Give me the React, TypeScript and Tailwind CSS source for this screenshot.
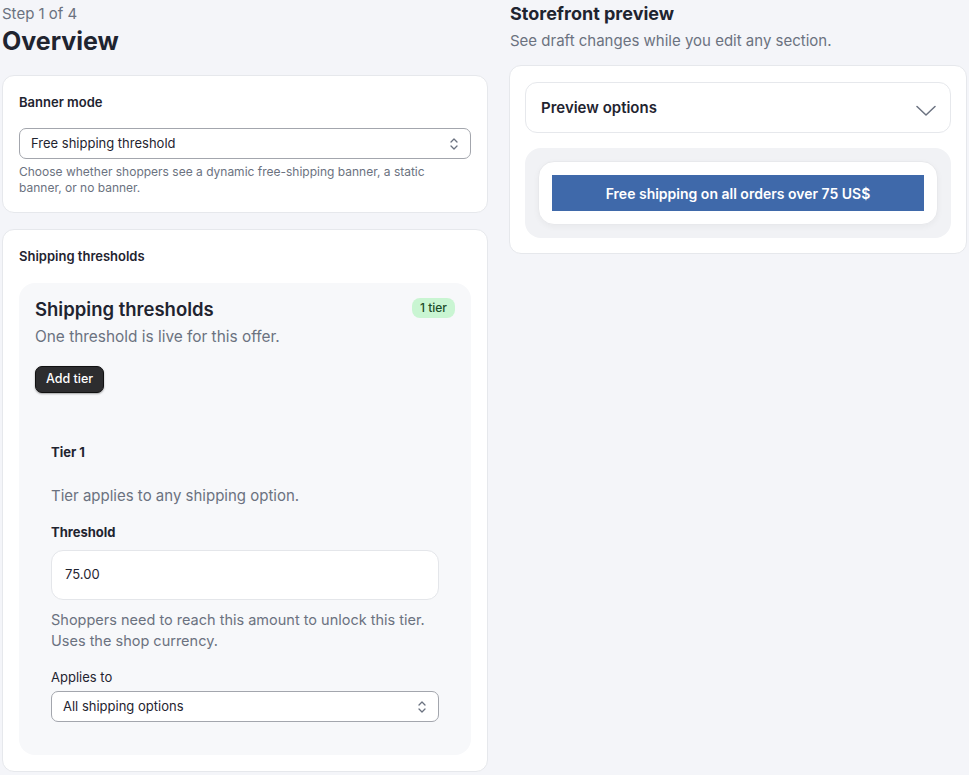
const font = { fontFamily: "Inter, 'Noto Sans', sans-serif" };

function UpDown() {
  return (
    <svg width="10" height="14" viewBox="0 0 10 14" fill="none" stroke="#6b7280" strokeWidth="1.3" strokeLinecap="round" strokeLinejoin="round">
      <path d="M2 5 5 2l3 3" />
      <path d="M2 9l3 3 3-3" />
    </svg>
  );
}

function Chevron() {
  return (
    <svg width="20" height="11" viewBox="0 0 20 11" fill="none" stroke="#6b7280" strokeWidth="1.5" strokeLinecap="round" strokeLinejoin="round">
      <path d="M1 1.5l9 8.5 9-8.5" />
    </svg>
  );
}

function SelectBox({ value }: { value: string }) {
  return (
    <div className="flex h-[31px] items-center justify-between rounded-[7px] border border-[#a3a6ad] bg-white pl-[11px] pr-[11px] text-[13px] text-[#1f2430]">
      <span>{value}</span>
      <UpDown />
    </div>
  );
}

function BannerModeCard() {
  return (
    <section className="rounded-xl border border-[#e6e8ec] bg-white px-4 pt-4 pb-4">
      <h3 className="text-[13px] leading-5 font-semibold text-[#1f2430]">Banner mode</h3>
      <div className="mt-4">
        <SelectBox value="Free shipping threshold" />
      </div>
      <p className="mt-[5px] max-w-[430px] text-[12px] leading-4 text-[#6b7280]">
        Choose whether shoppers see a dynamic free-shipping banner, a static
        banner, or no banner.
      </p>
    </section>
  );
}

function TierEditor() {
  return (
    <div className="mt-[49px] px-4 pb-[17px]">
      <h4 className="text-[13px] leading-5 font-bold text-[#1f2430]">Tier 1</h4>
      <p className="mt-[23px] text-[15px] leading-[22px] text-[#6b7280]">
        Tier applies to any shipping option.
      </p>
      <label className="mt-[15px] block text-[13px] leading-5 font-bold text-[#1f2430]">Threshold</label>
      <div className="mt-2 flex h-[50px] items-center rounded-xl border border-[#e4e6ea] bg-white px-[13px] text-[13px] text-[#1f2430]">
        75.00
      </div>
      <p className="mt-[9px] text-[14.5px] leading-[21px] text-[#6b7280]">
        Shoppers need to reach this amount to unlock this tier.
        <br />
        Uses the shop currency.
      </p>
      <label className="mt-[16px] block text-[13px] leading-5 text-[#1f2430]">Applies to</label>
      <div className="mt-1">
        <SelectBox value="All shipping options" />
      </div>
    </div>
  );
}

function ThresholdsCard() {
  return (
    <section className="mt-4 rounded-xl border border-[#e6e8ec] bg-white px-4 pt-4 pb-4">
      <h3 className="text-[13px] leading-5 font-semibold text-[#1f2430]">Shipping thresholds</h3>
      <div className="mt-[17px] rounded-2xl bg-[#f7f8fa] px-4 pt-[14px] pb-4">
        <div className="flex items-start justify-between">
          <h2 className="text-[18.5px] leading-6 font-semibold text-[#1f2430]">Shipping thresholds</h2>
          <span className="mt-[1px] rounded-lg bg-[#c9f5d2] px-2 py-[2px] text-[12px] leading-4 font-medium text-[#1d4d2a]">
            1 tier
          </span>
        </div>
        <p className="mt-[5px] text-[15.4px] leading-[22px] text-[#6b7280]">
          One threshold is live for this offer.
        </p>
        <button className="mt-[18px] h-[27px] rounded-[7px] border border-[#111] bg-[#2d2d2f] px-[10px] text-[12.5px] font-medium text-white shadow-[0_1px_2px_rgba(0,0,0,0.35)]">
          Add tier
        </button>
        <TierEditor />
      </div>
    </section>
  );
}

function PreviewPanel() {
  return (
    <section className="mt-[13px] rounded-xl border border-[#e6e8ec] bg-white px-[15px] pt-4 pb-[15px]">
      <div className="flex h-[51px] items-center justify-between rounded-xl border border-[#e6e8ec] pl-[15px] pr-[14px]">
        <span className="pt-[2px] text-[15px] font-semibold text-[#1f2430]">Preview options</span>
        <span className="mt-[6px]">
          <Chevron />
        </span>
      </div>
      <div className="mt-[15px] rounded-2xl bg-[#f1f2f5] p-[13px]">
        <div className="rounded-2xl border border-[#e8e9ec] bg-white p-[13px] shadow-[0_2px_6px_rgba(0,0,0,0.04)]">
          <div className="flex h-[36px] items-center justify-center bg-[#3f69aa] text-[14px] font-semibold text-white">
            Free shipping on all orders over 75 US$
          </div>
        </div>
      </div>
    </section>
  );
}

export default function App() {
  return (
    <div style={font} className="flex min-h-screen gap-[21px] bg-[#f4f5f9] pl-[2px]">
      <div className="w-[486px] shrink-0">
        <p className="pt-[3px] text-[15px] leading-[22px] text-[#6b7280]">Step 1 of 4</p>
        <h1 className="text-[25px] leading-[32px] font-bold text-[#1f2430]">Overview</h1>
        <div className="mt-[18px]">
          <BannerModeCard />
          <ThresholdsCard />
        </div>
      </div>
      <div className="w-[458px] shrink-0">
        <h2 className="pt-[2px] pl-[1px] text-[18px] leading-6 font-bold text-[#1f2430]">Storefront preview</h2>
        <p className="mt-[4px] pl-[1px] text-[15px] leading-[22px] text-[#6b7280]">
          See draft changes while you edit any section.
        </p>
        <PreviewPanel />
      </div>
    </div>
  );
}
